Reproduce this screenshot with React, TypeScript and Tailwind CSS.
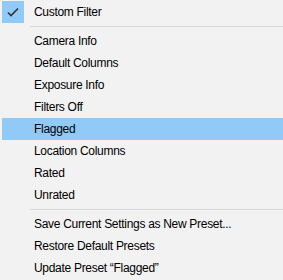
const groups: { label: string; checked?: boolean; active?: boolean }[][] = [
  [{ label: "Custom Filter", checked: true }],
  [
    { label: "Camera Info" },
    { label: "Default Columns" },
    { label: "Exposure Info" },
    { label: "Filters Off" },
    { label: "Flagged", active: true },
    { label: "Location Columns" },
    { label: "Rated" },
    { label: "Unrated" },
  ],
  [
    { label: "Save Current Settings as New Preset..." },
    { label: "Restore Default Presets" },
    { label: "Update Preset \u201cFlagged\u201d" },
  ],
];

const Check = () => (
  <svg width="12" height="10" viewBox="0 0 12 10" fill="none">
    <path d="M1 5.5 L4 8.5 L11 1.5" stroke="#333" strokeWidth="1.6" />
  </svg>
);

export default function App() {
  return (
    <div
      className="w-[283px] h-[280px] bg-[#f2f2f2] pt-px overflow-hidden text-[12px] tracking-[-0.3px] text-black"
      style={{ fontFamily: '"Liberation Sans", Arial, sans-serif' }}
    >
      {groups.map((items, gi) => (
        <div key={gi}>
          {gi > 0 && (
            <div className="h-[7px] flex items-center pl-[30px]">
              <div className="h-px w-full bg-[#d7d7d7]" />
            </div>
          )}
          {items.map((it) => (
            <div
              key={it.label}
              className={`h-[22px] ml-[2px] flex items-center ${it.active ? "bg-[#91c9f7]" : ""}`}
            >
              <div
                className={`w-[22px] h-[22px] flex items-center justify-center ${it.checked ? "bg-[#91c9f7]" : ""}`}
              >
                {it.checked && <Check />}
              </div>
              <span className="pl-[10px] whitespace-nowrap">{it.label}</span>
            </div>
          ))}
        </div>
      ))}
    </div>
  );
}
